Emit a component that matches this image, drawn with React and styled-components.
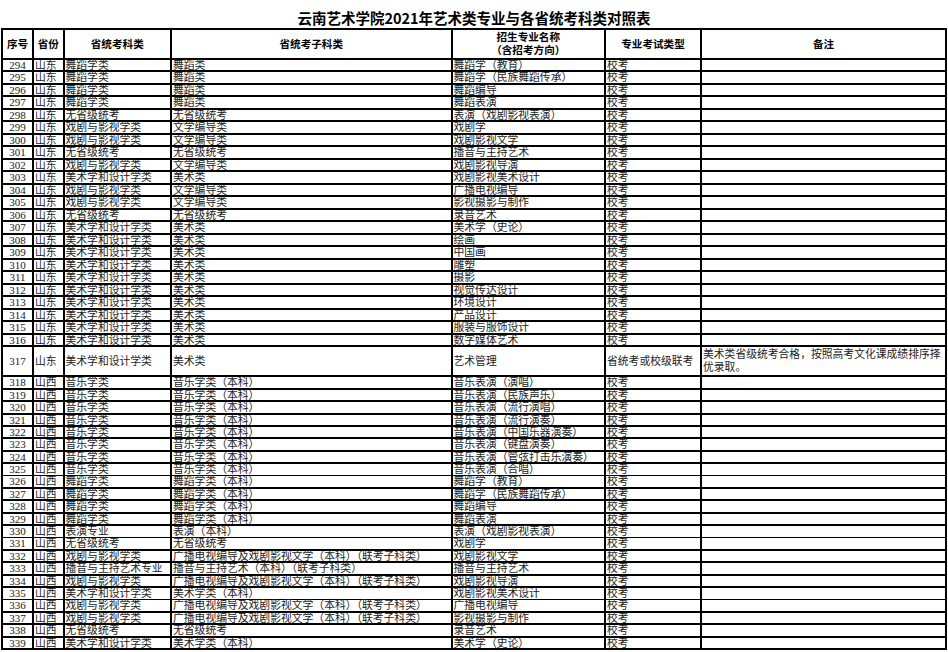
import React from "react";
import styled, { createGlobalStyle } from "styled-components";

const GlobalStyle = createGlobalStyle`
  html, body {
    margin: 0;
    padding: 0;
    background: #fff;
  }
  body {
    font-family: "Liberation Serif", "Noto Sans CJK SC", serif;
    color: #222;
  }
`;

const COLS = "29px 28.5px 105.5px 278.5px 151.5px 94px 243px";

const Page = styled.div`
  width: 946px;
  padding: 0 1px;
`;

const Title = styled.h1`
  margin: 0;
  height: 28px;
  box-sizing: border-box;
  padding-top: 10px;
  font-family: "Noto Sans CJK SC", sans-serif;
  font-size: 14.5px;
  line-height: 16px;
  font-weight: 700;
  text-align: center;
  color: #000;
`;

const Table = styled.div`
  display: flex;
  flex-direction: column;
  gap: 2px;
  padding: 2px;
  background: #000;
`;

const Row = styled.div`
  display: grid;
  grid-template-columns: ${COLS};
  gap: 2px;
  height: ${(p) => p.$h}px;
`;

const HeadCell = styled.div`
  display: flex;
  flex-direction: column;
  align-items: center;
  justify-content: center;
  background: #fff;
  font-family: "Noto Sans CJK SC", sans-serif;
  font-weight: 700;
  font-size: 10.6px;
  line-height: 13px;
  text-align: center;
  color: #000;
`;

const HeadLine = styled.span`
  display: block;
  height: 12.5px;
  line-height: 12.5px;
`;

const Cell = styled.div`
  display: flex;
  align-items: ${(p) => (p.$middle ? "center" : "flex-end")};
  justify-content: ${(p) => (p.$center ? "center" : "flex-start")};
  background: #fff;
  padding: 0 1px;
  font-size: 10.8px;
  line-height: ${(p) => (p.$middle ? "13px" : "10.5px")};
  white-space: ${(p) => (p.$wrap ? "normal" : "nowrap")};
  overflow: visible;
`;

const Num = styled.span`
  font-size: 11px;
`;

const GB = "广播电视编导及戏剧影视文学（本科）（联考子科类）";

const rows = [
  [294, "山东", "舞蹈学类", "舞蹈类", "舞蹈学（教育）"],
  [295, "山东", "舞蹈学类", "舞蹈类", "舞蹈学（民族舞蹈传承）"],
  [296, "山东", "舞蹈学类", "舞蹈类", "舞蹈编导"],
  [297, "山东", "舞蹈学类", "舞蹈类", "舞蹈表演"],
  [298, "山东", "无省级统考", "无省级统考", "表演（戏剧影视表演）"],
  [299, "山东", "戏剧与影视学类", "文学编导类", "戏剧学"],
  [300, "山东", "戏剧与影视学类", "文学编导类", "戏剧影视文学"],
  [301, "山东", "无省级统考", "无省级统考", "播音与主持艺术"],
  [302, "山东", "戏剧与影视学类", "文学编导类", "戏剧影视导演"],
  [303, "山东", "美术学和设计学类", "美术类", "戏剧影视美术设计"],
  [304, "山东", "戏剧与影视学类", "文学编导类", "广播电视编导"],
  [305, "山东", "戏剧与影视学类", "文学编导类", "影视摄影与制作"],
  [306, "山东", "无省级统考", "无省级统考", "录音艺术"],
  [307, "山东", "美术学和设计学类", "美术类", "美术学（史论）"],
  [308, "山东", "美术学和设计学类", "美术类", "绘画"],
  [309, "山东", "美术学和设计学类", "美术类", "中国画"],
  [310, "山东", "美术学和设计学类", "美术类", "雕塑"],
  [311, "山东", "美术学和设计学类", "美术类", "摄影"],
  [312, "山东", "美术学和设计学类", "美术类", "视觉传达设计"],
  [313, "山东", "美术学和设计学类", "美术类", "环境设计"],
  [314, "山东", "美术学和设计学类", "美术类", "产品设计"],
  [315, "山东", "美术学和设计学类", "美术类", "服装与服饰设计"],
  [316, "山东", "美术学和设计学类", "美术类", "数字媒体艺术"],
  [
    317,
    "山东",
    "美术学和设计学类",
    "美术类",
    "艺术管理",
    "省统考或校级联考",
    "美术类省级统考合格，按照高考文化课成绩排序择优录取。",
  ],
  [318, "山西", "音乐学类", "音乐学类（本科）", "音乐表演（演唱）"],
  [319, "山西", "音乐学类", "音乐学类（本科）", "音乐表演（民族声乐）"],
  [320, "山西", "音乐学类", "音乐学类（本科）", "音乐表演（流行演唱）"],
  [321, "山西", "音乐学类", "音乐学类（本科）", "音乐表演（流行演奏）"],
  [322, "山西", "音乐学类", "音乐学类（本科）", "音乐表演（中国乐器演奏）"],
  [323, "山西", "音乐学类", "音乐学类（本科）", "音乐表演（键盘演奏）"],
  [324, "山西", "音乐学类", "音乐学类（本科）", "音乐表演（管弦打击乐演奏）"],
  [325, "山西", "音乐学类", "音乐学类（本科）", "音乐表演（合唱）"],
  [326, "山西", "舞蹈学类", "舞蹈学类（本科）", "舞蹈学（教育）"],
  [327, "山西", "舞蹈学类", "舞蹈学类（本科）", "舞蹈学（民族舞蹈传承）"],
  [328, "山西", "舞蹈学类", "舞蹈学类（本科）", "舞蹈编导"],
  [329, "山西", "舞蹈学类", "舞蹈学类（本科）", "舞蹈表演"],
  [330, "山西", "表演专业", "表演（本科）", "表演（戏剧影视表演）"],
  [331, "山西", "无省级统考", "无省级统考", "戏剧学"],
  [332, "山西", "戏剧与影视学类", GB, "戏剧影视文学"],
  [333, "山西", "播音与主持艺术专业", "播音与主持艺术（本科）（联考子科类）", "播音与主持艺术"],
  [334, "山西", "戏剧与影视学类", GB, "戏剧影视导演"],
  [335, "山西", "美术学和设计学类", "美术学类（本科）", "戏剧影视美术设计"],
  [336, "山西", "戏剧与影视学类", GB, "广播电视编导"],
  [337, "山西", "戏剧与影视学类", GB, "影视摄影与制作"],
  [338, "山西", "无省级统考", "无省级统考", "录音艺术"],
  [339, "山西", "美术学和设计学类", "美术学类（本科）", "美术学（史论）"],
];

const rowHeight = (num, tall) => {
  if (tall) return 28;
  return num < 317 ? 10.52 : 10.4;
};

const App = () => {
  return (
    <Page>
      <GlobalStyle />
      <Title>云南艺术学院2021年艺术类专业与各省统考科类对照表</Title>
      <Table>
        <Row $h={27.5}>
          <HeadCell>序号</HeadCell>
          <HeadCell>省份</HeadCell>
          <HeadCell>省统考科类</HeadCell>
          <HeadCell>省统考子科类</HeadCell>
          <HeadCell>
            <HeadLine>招生专业名称</HeadLine>
            <HeadLine>（含招考方向）</HeadLine>
          </HeadCell>
          <HeadCell>专业考试类型</HeadCell>
          <HeadCell>备注</HeadCell>
        </Row>
        {rows.map(([num, prov, cat, sub, major, type = "校考", note = ""]) => {
          const tall = Boolean(note);
          return (
            <Row key={num} $h={rowHeight(num, tall)}>
              <Cell $center $middle={tall}>
                <Num>{num}</Num>
              </Cell>
              <Cell $middle={tall}>{prov}</Cell>
              <Cell $middle={tall}>{cat}</Cell>
              <Cell $middle={tall}>{sub}</Cell>
              <Cell $middle={tall}>{major}</Cell>
              <Cell $middle={tall}>{type}</Cell>
              <Cell $middle={tall} $wrap>
                {note}
              </Cell>
            </Row>
          );
        })}
      </Table>
    </Page>
  );
};

export default App;
